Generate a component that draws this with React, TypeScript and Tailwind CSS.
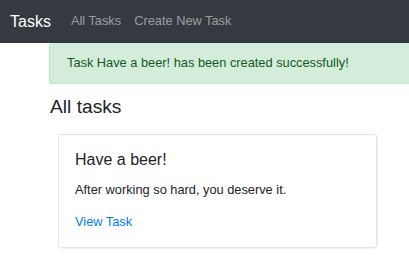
export default function App() {
  return (
    <div className="w-[409px] h-[264px] overflow-hidden bg-white" style={{ fontFamily: '"Liberation Sans", Arial, sans-serif' }}>
      <nav className="h-[43px] bg-[#343a40] flex items-center pl-[10px]">
        <span className="text-[16px] leading-none text-white mr-[20px]">Tasks</span>
        <span className="text-[12.8px] leading-none text-[rgba(255,255,255,0.5)] mr-[13px]">All Tasks</span>
        <span className="text-[12.8px] leading-none text-[rgba(255,255,255,0.5)]">Create New Task</span>
      </nav>
      <div className="pl-[49px]">
        <div className="w-[400px] h-[41px] bg-[#d4edda] border border-t-0 border-[#c3e6cb] rounded-[3px] flex items-center pl-[17px] pb-[1px] text-[12.8px] leading-[19.2px] text-[#155724]">
          Task Have a beer! has been created successfully!
        </div>
        <h4 className="mt-[11px] ml-[1px] text-[19.2px] leading-[23px] text-[#212529]">All tasks</h4>
        <div className="mt-[16px] ml-[9px] w-[319px] h-[114px] border border-[#e4e4e4] rounded-[3px] shadow-[1px_1px_1px_rgba(0,0,0,0.06)] px-[16px] pt-[15px]">
          <h5 className="text-[16px] leading-[19.2px] text-[#212529]">Have a beer!</h5>
          <p className="mt-[10.5px] text-[12.8px] leading-[19.2px] text-[#212529]">After working so hard, you deserve it.</p>
          <a className="block mt-[13px] text-[12.8px] leading-[19.2px] text-[#007bff]">View Task</a>
        </div>
      </div>
    </div>
  );
}
